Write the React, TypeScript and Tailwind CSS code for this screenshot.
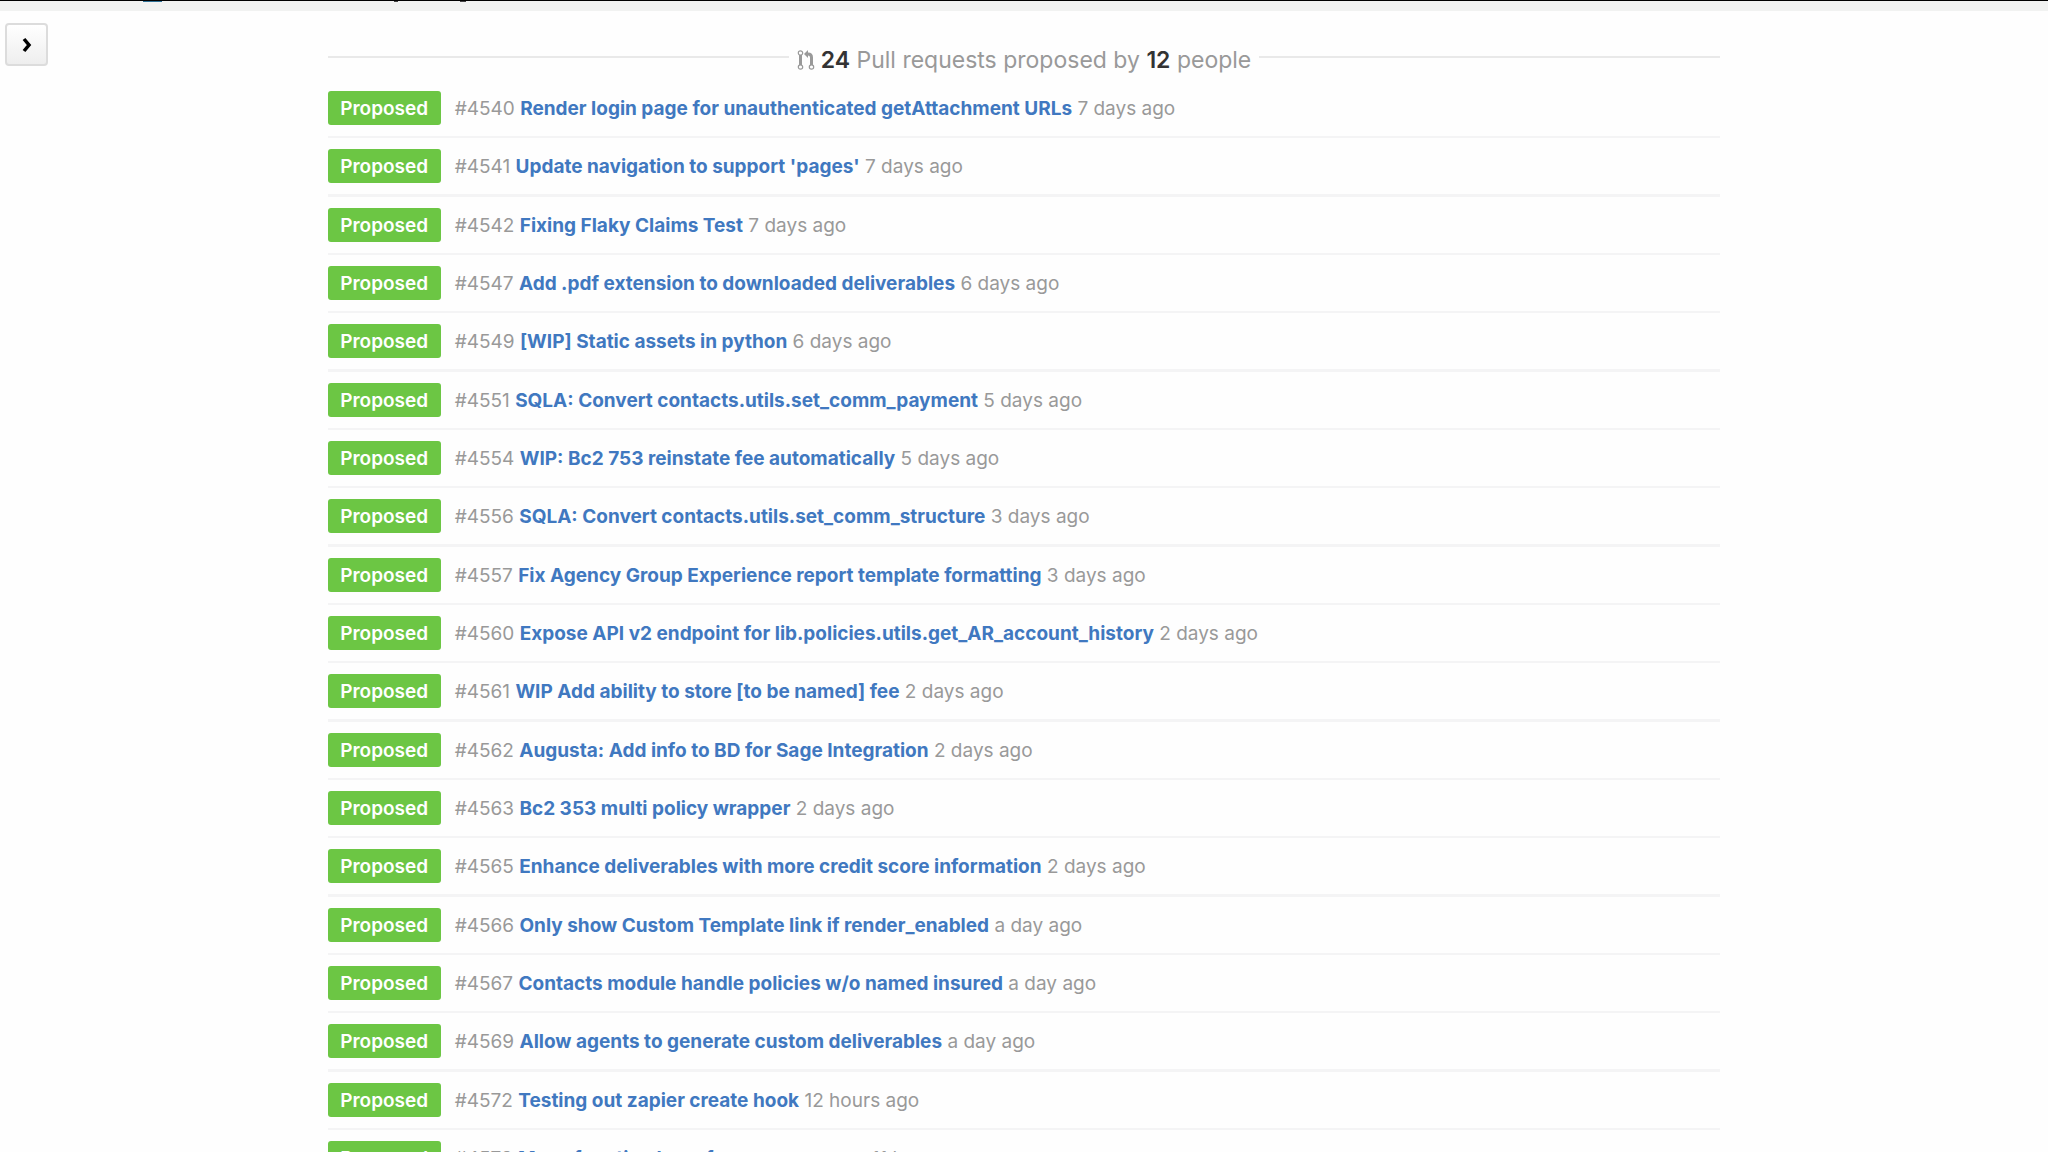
import { useState } from "react";

const pulls = [
  { id: 4540, title: "Render login page for unauthenticated getAttachment URLs", when: "7 days ago" },
  { id: 4541, title: "Update navigation to support 'pages'", when: "7 days ago" },
  { id: 4542, title: "Fixing Flaky Claims Test", when: "7 days ago" },
  { id: 4547, title: "Add .pdf extension to downloaded deliverables", when: "6 days ago" },
  { id: 4549, title: "[WIP] Static assets in python", when: "6 days ago" },
  { id: 4551, title: "SQLA: Convert contacts.utils.set_comm_payment", when: "5 days ago" },
  { id: 4554, title: "WIP: Bc2 753 reinstate fee automatically", when: "5 days ago" },
  { id: 4556, title: "SQLA: Convert contacts.utils.set_comm_structure", when: "3 days ago" },
  { id: 4557, title: "Fix Agency Group Experience report template formatting", when: "3 days ago" },
  { id: 4560, title: "Expose API v2 endpoint for lib.policies.utils.get_AR_account_history", when: "2 days ago" },
  { id: 4561, title: "WIP Add ability to store [to be named] fee", when: "2 days ago" },
  { id: 4562, title: "Augusta: Add info to BD for Sage Integration", when: "2 days ago" },
  { id: 4563, title: "Bc2 353 multi policy wrapper", when: "2 days ago" },
  { id: 4565, title: "Enhance deliverables with more credit score information", when: "2 days ago" },
  { id: 4566, title: "Only show Custom Template link if render_enabled", when: "a day ago" },
  { id: 4567, title: "Contacts module handle policies w/o named insured", when: "a day ago" },
  { id: 4569, title: "Allow agents to generate custom deliverables", when: "a day ago" },
  { id: 4572, title: "Testing out zapier create hook", when: "12 hours ago" },
  { id: 4573, title: "Move function base from user access", when: "11 hours ago" },
];

function PullRequestIcon() {
  return (
    <svg className="h-5 w-[18px]" viewBox="0 0 18 20" fill="none" stroke="currentColor" aria-hidden="true">
      <circle cx="3.500" cy="3" r="2.200" strokeWidth="1.200" />
      <circle cx="3.500" cy="17" r="2.200" strokeWidth="1.200" />
      <circle cx="14.500" cy="17" r="2.200" strokeWidth="1.200" />
      <path d="M3.500 5v10" strokeWidth="3" />
      <path d="M14.500 15V7.500q0-3.500-3.500-3.500H10" strokeWidth="3" />
      <path d="M11 0v8L7 4z" fill="currentColor" stroke="none" />
    </svg>
  );
}

function App() {
  const [open, setOpen] = useState(false);

  return (
    <div className="h-screen overflow-hidden bg-[#fefefe] font-[Inter,sans-serif]">
      <header className="relative h-[11px] border-t border-black bg-[#f1f2f1]">
        <span className="absolute left-[143px] top-0 h-px w-[19px] bg-[#2f7196]" />
        <span className="absolute left-[394px] top-0 h-px w-1 bg-[#444]" />
        <span className="absolute left-[460px] top-0 h-px w-1.5 bg-[#444]" />
      </header>

      <div className="flex">
        <div className="w-[16%] shrink-0 pl-[5px] pt-3">
          <button
            type="button"
            aria-label="Toggle sidebar"
            aria-expanded={open}
            onClick={() => setOpen(!open)}
            className="flex h-[43px] w-[43px] items-center justify-center rounded-sm border-2 border-[#dcdcdc] bg-linear-to-b from-white to-[#eeeeee] text-black"
          >
            <svg className="h-4 w-3" viewBox="0 0 12 16" fill="none" stroke="currentColor" strokeWidth="3.500" aria-hidden="true">
              <path d="M3 2l5 6-5 6" />
            </svg>
          </button>
        </div>

        <main className="w-[68%] pt-[33px]">
          <h3 className="flex h-8 items-center text-[23px] font-normal leading-8 text-[#999]">
            <span className="mb-1.5 h-0.5 flex-1 bg-[#e9e9e9]" />
            <span className="flex items-center gap-1.5 px-2">
              <PullRequestIcon />
              <span>
                <strong className="font-semibold text-[#333]">24</strong> Pull requests proposed by{" "}
                <strong className="font-semibold text-[#333]">12</strong> people
              </span>
            </span>
            <span className="mb-1.5 h-0.5 flex-1 bg-[#e9e9e9]" />
          </h3>

          <ul className="mt-1">
            {pulls.map((pull) => (
              <li
                key={pull.id}
                className="flex h-[58px] items-center border-b-2 border-[#f4f4f5] text-[19px] leading-6 text-[#999] nth-[3n+2]:h-[59px] nth-[3n+2]:border-b-3"
              >
                <span className="mr-3.5 flex h-[34px] w-[113px] shrink-0 items-center justify-center rounded-[3px] bg-[#6cc644] pt-0.5 font-semibold text-white">
                  Proposed
                </span>
                <p className="whitespace-nowrap pt-0.5">
                  #{pull.id}{" "}
                  <a href={"#" + pull.id} className="font-bold text-[#4078c0]">
                    {pull.title}
                  </a>{" "}
                  {pull.when}
                </p>
              </li>
            ))}
          </ul>
        </main>
      </div>
    </div>
  );
}

export default App;
